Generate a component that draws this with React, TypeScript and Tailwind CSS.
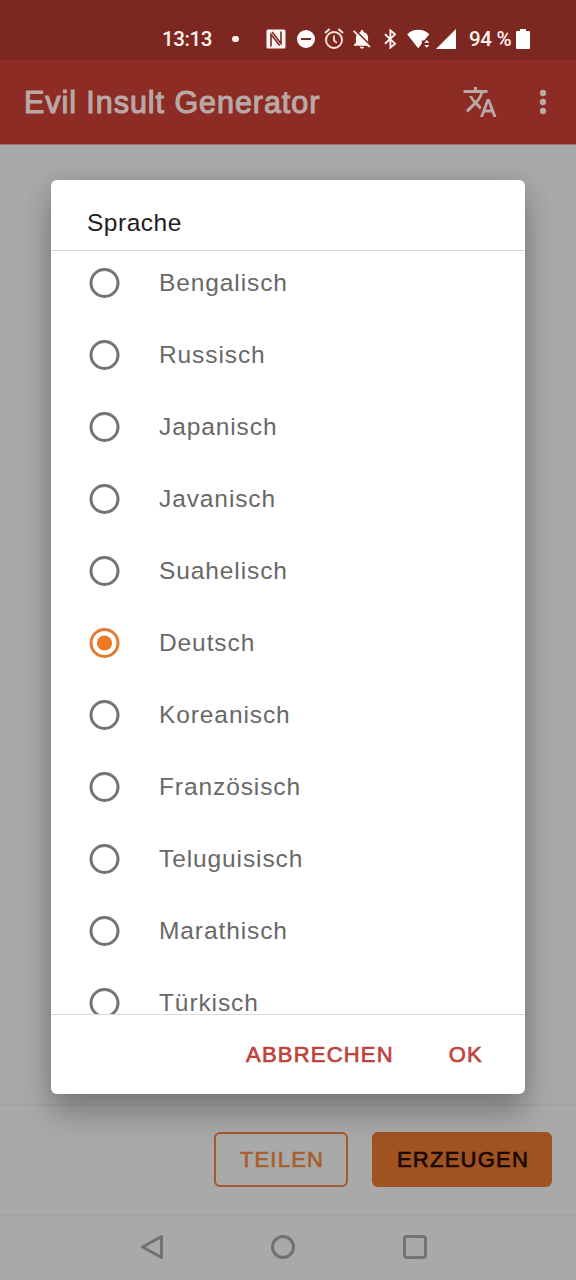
import React from "react";

const LANGUAGES = [
  "Bengalisch",
  "Russisch",
  "Japanisch",
  "Javanisch",
  "Suahelisch",
  "Deutsch",
  "Koreanisch",
  "Französisch",
  "Teluguisisch",
  "Marathisch",
  "Türkisch",
];

function StatusBar() {
  return (
    <div className="flex h-[60px] shrink-0 items-center bg-[#7c2821] pt-[18px] pl-[162px] font-['Roboto',sans-serif] text-[20.5px] leading-none font-medium text-[#fff4f2]">
      <span className="w-[50px] tracking-[-0.4px] whitespace-nowrap">13:13</span>
      <span className="ml-[20px] size-[6.5px] rounded-full bg-[#fff4f2]" />
      {/* NFC */}
      <svg className="ml-[27.5px]" width="20" height="20" viewBox="0 0 20 20">
        <rect x="0.5" y="0.5" width="19" height="19" rx="1.5" fill="#fff4f2" />
        <path d="M5 17.500V5.500l8.800 11M15 2.500v12L6 3" fill="none" stroke="#7c2821" strokeWidth="1.600" />
      </svg>
      {/* Do not disturb */}
      <svg className="ml-[11px]" width="18" height="18" viewBox="0 0 18 18">
        <circle cx="9" cy="9" r="9" fill="#fff" />
        <path d="M4 9h10" stroke="#7c2821" strokeWidth="2" />
      </svg>
      {/* Alarm */}
      <svg className="ml-[9px]" width="20" height="22" viewBox="0 0 20 22" fill="none" stroke="#fbe4e0">
        <circle cx="10" cy="12" r="8" strokeWidth="1.900" />
        <path d="M10 7.500v5l2.800 2.300" strokeWidth="1.700" />
        <path d="M1 5l4.600-3.900M19 5l-4.600-3.900" strokeWidth="2" />
      </svg>
      {/* Notifications off */}
      <svg className="ml-[8px]" width="20" height="20" viewBox="0 0 20 21">
        <path d="M10 1c-.9 0-1.500.6-1.500 1.400v.8C5 4 3.600 6.800 3.600 9.500v5L1.500 16.600v1.100h17v-1.100l-2.100-2.100v-5c0-2.700-1.400-5.500-4.900-6.300v-.8C11.500 1.600 10.900 1 10 1zM7.900 18.600c0 1.200 1 2 2.100 2s2.100-.8 2.100-2z" fill="#fff4f2" />
        <path d="M2.500 0.800l18 18" stroke="#7c2821" strokeWidth="1.800" />
        <path d="M1.200 2l17 17" stroke="#fff4f2" strokeWidth="1.800" />
      </svg>
      {/* Bluetooth */}
      <svg className="ml-[12px]" width="13" height="20" viewBox="0 0 13 20" fill="none" stroke="#fff4f2" strokeWidth="1.900">
        <path d="M1 5.200l10 9.400-4.600 4V1.400l4.600 4-10 9.400" />
      </svg>
      {/* Wi-Fi */}
      <svg className="ml-[10px]" width="24" height="20" viewBox="0 0 24 20">
        <path d="M11.200 19.200L0.200 5.200C6.500-.6 16-.6 22.400 5.200l-5.200 6.300h-2.400v3.200z" fill="#fff" />
        <path d="M17.200 13.800h5.200L19.800 11zM17.200 16h5.200l-2.600 2.800z" fill="#fff4f2" />
      </svg>
      {/* Signal */}
      <svg className="ml-[5px]" width="20" height="20" viewBox="0 0 20 20">
        <path d="M20 0v20H0z" fill="#fff" />
      </svg>
      <span className="ml-[13px] w-[42px] tracking-[-0.3px] whitespace-nowrap">94 %</span>
      {/* Battery */}
      <svg className="ml-[5px]" width="14" height="20" viewBox="0 0 14 20">
        <path d="M4 0h6v2H13q1 0 1 1v16q0 1-1 1H1q-1 0-1-1V3q0-1 1-1h3z" fill="#fff" />
      </svg>
    </div>
  );
}

function AppBar() {
  return (
    <header className="flex h-[85px] shrink-0 items-center border-b border-[#a2706d] bg-[#8d2b25] pl-6 text-[#b9a9a6]">
      <h1 className="w-[438px] pt-px text-[30.5px] leading-none tracking-[0.950px] [-webkit-text-stroke:1.100px_#b9a9a6]">Evil Insult Generator</h1>
      <svg width="36" height="36" viewBox="0 0 24 24" fill="currentColor">
        <path d="M12.870 15.070l-2.540-2.510.03-.03c1.740-1.940 2.980-4.170 3.710-6.530H17V4h-7V2H8v2H1v1.990h11.170C11.500 7.920 10.440 9.750 9 11.350 8.070 10.320 7.300 9.190 6.690 8h-2c.73 1.630 1.730 3.170 2.980 4.560l-5.090 5.020L4 19l5-5 3.110 3.110.76-2.040zM18.500 10h-2L12 22h2l1.120-3h4.750L21 22h2l-4.500-12zm-2.620 7l1.620-4.330L19.120 17h-3.240z" />
      </svg>
      <svg className="ml-[27px]" width="36" height="36" viewBox="0 0 24 24" fill="currentColor">
        <circle cx="12" cy="6" r="2.100" />
        <circle cx="12" cy="12" r="2.100" />
        <circle cx="12" cy="18" r="2.100" />
      </svg>
    </header>
  );
}

function Radio({ checked }: { checked: boolean }) {
  return (
    <svg width="31" height="30" viewBox="0 0 31 30" fill="none">
      <circle cx="15.500" cy="15" r="13.500" stroke={checked ? "#e17c35" : "#747474"} strokeWidth="3" />
      {checked && <circle cx="15.500" cy="15" r="7.600" fill="#ee781f" />}
    </svg>
  );
}

function LanguageDialog() {
  return (
    <div
      role="dialog"
      className="absolute top-[180px] left-[51px] flex h-[914px] w-[474px] flex-col overflow-hidden rounded-md bg-white shadow-[0_20px_30px_rgba(0,0,0,0.24),0_0_24px_rgba(0,0,0,0.12)]"
    >
      <h2 className="h-[71px] shrink-0 border-b border-[#d9d9d9] pt-[29px] pl-9 text-[24.5px] leading-[28px] tracking-[0.500px] text-[#202020]">
        Sprache
      </h2>
      <ul className="-mb-px min-h-0 flex-1 overflow-hidden">
        {LANGUAGES.map((name, i) => (
          <li key={name} className={i === 0 ? "-mt-1 flex h-[72px] items-center pl-[38px]" : "flex h-[72px] items-center pl-[38px]"}>
            <Radio checked={name === "Deutsch"} />
            <span className="ml-[39px] text-[24.5px] leading-[24px] tracking-[0.900px] text-[#686868]">{name}</span>
          </li>
        ))}
      </ul>
      <div className="flex h-20 shrink-0 items-center justify-end border-t border-[#d9d9d9] pr-[42px] text-[22px] leading-none tracking-[1.200px] text-[#c0423b] [-webkit-text-stroke:0.7px_#c0423b]">
        <button>ABBRECHEN</button>
        <button className="ml-[55px]">OK</button>
      </div>
    </div>
  );
}

export default function App() {
  return (
    <div className="relative flex h-[1280px] w-[576px] flex-col overflow-hidden bg-[#a9a9a9] font-['Liberation_Sans',Arial,sans-serif]">
      <StatusBar />
      <AppBar />
      <main className="flex-1" />
      <footer className="flex h-[112px] shrink-0 items-start justify-end gap-6 border-y-2 border-[#a9a29c] pt-[26px] pr-6 text-[22px] leading-none tracking-[1.250px]">
        <button className="h-[55px] w-[134px] rounded-md border-2 border-[#a35a2b] pl-0.5 text-[#a85f2e] [-webkit-text-stroke:0.7px_#a85f2e]">TEILEN</button>
        <button className="h-[55px] w-[180px] rounded-md bg-[#a05220] pl-0.5 text-[#1a0800] [-webkit-text-stroke:0.7px_#1a0800]">ERZEUGEN</button>
      </footer>
      <nav className="flex h-16 shrink-0 items-center pb-0.5 pl-[139px] text-[#727272]">
        <svg width="26" height="26" viewBox="0 0 26 26" fill="none" stroke="currentColor" strokeWidth="3" strokeLinejoin="round">
          <path d="M22.500 2.500v21L3.500 13z" />
        </svg>
        <svg className="ml-[105px]" width="26" height="26" viewBox="0 0 26 26" fill="none" stroke="currentColor" strokeWidth="3">
          <circle cx="13" cy="13" r="10.500" />
        </svg>
        <svg className="ml-[106px]" width="26" height="26" viewBox="0 0 26 26" fill="none" stroke="currentColor" strokeWidth="3">
          <rect x="2.500" y="2.500" width="21" height="21" rx="2.500" />
        </svg>
      </nav>
      <LanguageDialog />
    </div>
  );
}
